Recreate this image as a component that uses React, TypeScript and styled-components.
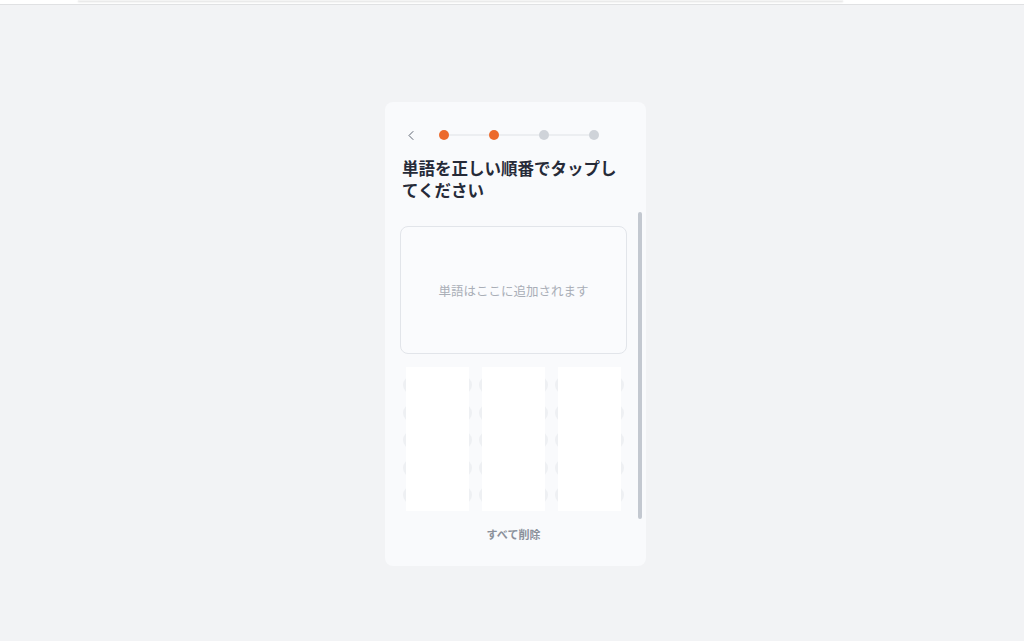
import React from "react";
import styled, { createGlobalStyle } from "styled-components";
import { ChevronLeft } from "lucide-react";

const GlobalStyle = createGlobalStyle`
  html, body {
    margin: 0;
    padding: 0;
    background-color: #f2f3f5;
    font-family: "Noto Sans CJK JP", "Noto Sans", sans-serif;
  }
`;

const Page = styled.div`
  width: 100%;
  height: 641px;
  display: flex;
  flex-direction: column;
  background-color: #f2f3f5;
`;

const TopBar = styled.div`
  height: 4px;
  background-color: #ffffff;
  border-bottom: 1px solid #e0e1e3;
`;

const TopStrip = styled.div`
  margin-left: 78px;
  width: 765px;
  height: 1px;
  background-color: #f4f4f4;
  box-shadow: 0 1px 2px rgba(0, 0, 0, 0.18);
`;

const Stage = styled.div`
  display: flex;
  justify-content: center;
  padding-top: 97px;
`;

const Card = styled.div`
  width: 261px;
  height: 464px;
  margin-left: 7px;
  box-sizing: border-box;
  background-color: #f9fafc;
  border-radius: 8px;
  padding: 23px 0 0 15px;
  display: flex;
  flex-direction: column;
`;

const Header = styled.div`
  height: 20px;
  display: flex;
  align-items: center;
  gap: 20px;
  padding-left: 3px;
`;

const BackButton = styled.div`
  width: 16px;
  height: 20px;
  display: flex;
  align-items: center;
  justify-content: center;
  color: #5f6673;
`;

const Steps = styled.div`
  display: flex;
  align-items: center;
`;

const Dot = styled.div<{ $active: boolean }>`
  width: 10px;
  height: 10px;
  border-radius: 50%;
  background-color: ${(p) => (p.$active ? "#ec6a2c" : "#cfd3d9")};
`;

const Line = styled.div`
  width: 40px;
  height: 2px;
  background-color: #eceef1;
`;

const Title = styled.h1`
  margin: 12px 16px 0 2px;
  font-size: 16.5px;
  line-height: 22px;
  font-weight: 700;
  color: #262a38;
`;

const ScrollArea = styled.div`
  margin-top: 11px;
  height: 307px;
  display: flex;
  gap: 11px;
`;

const ScrollContent = styled.div`
  width: 227px;
  padding-top: 14px;
  display: flex;
  flex-direction: column;
  gap: 13px;
`;

const Scrollbar = styled.div`
  width: 4px;
  height: 307px;
  border-radius: 2px;
  background-color: #c3c8d0;
`;

const DropBox = styled.div`
  height: 128px;
  box-sizing: border-box;
  border: 1px solid #e2e5ea;
  border-radius: 8px;
  background-color: #fafbfd;
  display: flex;
  align-items: center;
  justify-content: center;
  font-size: 12.5px;
  color: #a9aeb7;
`;

const WordGrid = styled.div`
  display: grid;
  grid-template-columns: repeat(3, 69px);
  column-gap: 7px;
  padding: 0 3px;
`;

const WordColumn = styled.div`
  position: relative;
  height: 144px;
  box-sizing: border-box;
  padding: 9px 0 0;
  display: flex;
  flex-direction: column;
  gap: 9.5px;

  &::after {
    content: "";
    position: absolute;
    top: 0;
    bottom: 0;
    left: 3px;
    right: 3px;
    background-color: #ffffff;
  }
`;

const Pill = styled.div`
  height: 18px;
  border-radius: 9px;
  background-color: #eef0f3;
`;

const ClearButton = styled.div`
  margin: 7px 19px 0 0;
  height: 16px;
  line-height: 16px;
  text-align: center;
  font-size: 11px;
  font-weight: 700;
  color: #8b919b;
`;

const steps = [true, true, false, false];

export default function App() {
  return (
    <>
      <GlobalStyle />
      <Page>
        <TopBar>
          <TopStrip />
        </TopBar>
        <Stage>
          <Card>
            <Header>
              <BackButton>
                <ChevronLeft size={17} strokeWidth={1.5} />
              </BackButton>
              <Steps>
                {steps.map((active, i) => (
                  <React.Fragment key={i}>
                    {i > 0 && <Line />}
                    <Dot $active={active} />
                  </React.Fragment>
                ))}
              </Steps>
            </Header>
            <Title>単語を正しい順番でタップしてください</Title>
            <ScrollArea>
              <ScrollContent>
                <DropBox>単語はここに追加されます</DropBox>
                <WordGrid>
                  {[0, 1, 2].map((c) => (
                    <WordColumn key={c}>
                      {[0, 1, 2, 3, 4].map((r) => (
                        <Pill key={r} />
                      ))}
                    </WordColumn>
                  ))}
                </WordGrid>
              </ScrollContent>
              <Scrollbar />
            </ScrollArea>
            <ClearButton>すべて削除</ClearButton>
          </Card>
        </Stage>
      </Page>
    </>
  );
}
